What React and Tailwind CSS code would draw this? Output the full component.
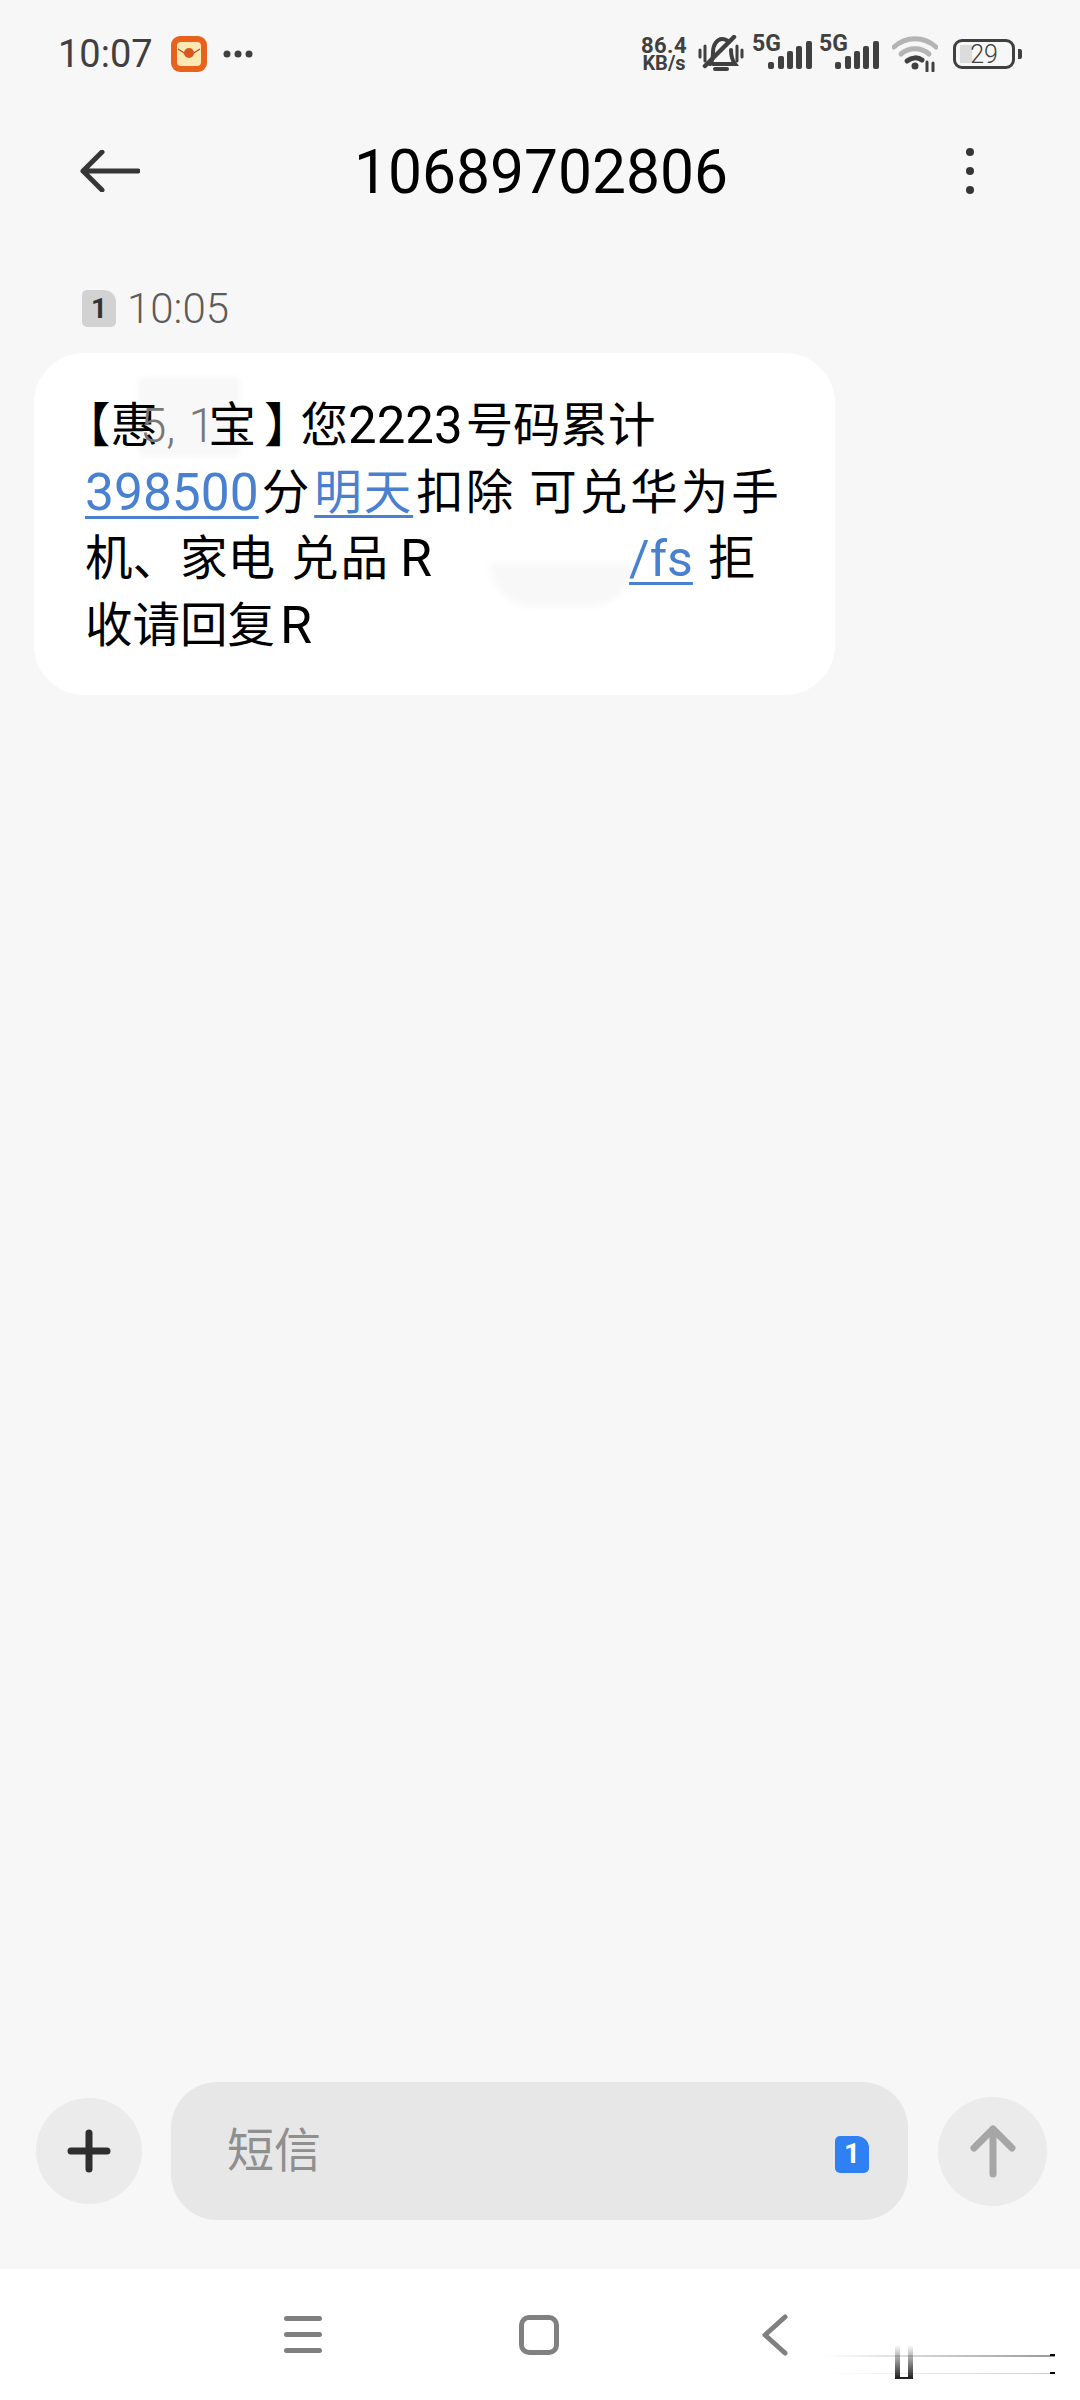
const Bars = () => (
    <svg width="44" height="28" viewBox="0 0 44 28" fill="#404040">
        <rect x="0" y="21" width="6" height="7" rx="2" />
        <rect x="10" y="15" width="6" height="13" rx="2" />
        <rect x="19" y="10" width="6" height="18" rx="2" />
        <rect x="28" y="5" width="6" height="23" rx="2" />
        <rect x="38" y="0" width="6" height="28" rx="2" />
    </svg>
);

const Signal = () => (
    <div className="relative w-[60px] h-[36px]">
        <span className="absolute left-0 top-[-5px] text-[23px] leading-[26px] font-bold text-[#404040]">5G</span>
        <div className="absolute left-[16px] top-[5px]">
            <Bars />
        </div>
    </div>
);

const Link = ({ children, className = '' }) => (
    <span className={`text-[#4a80d0] underline decoration-[2.5px] underline-offset-[6px] ${className}`}>
        {children}
    </span>
);

export default function App() {
    return (
        <div className="flex flex-col w-[1080px] h-[2400px] bg-[#f7f7f7] overflow-hidden font-['Roboto','Noto_Sans_CJK_SC',sans-serif]">
            {/* status bar */}
            <div className="flex items-center justify-between h-[108px] pl-[58px] pr-[58px] text-[#404040]">
                <div className="flex items-center">
                    <span className="text-[38px] leading-[38px] w-[113px]">10:07</span>
                    <svg width="36" height="36" viewBox="0 0 36 36">
                        <rect width="36" height="36" rx="9" fill="#e8621c" />
                        <rect x="6" y="6" width="24" height="24" rx="4" fill="#fde8b4" />
                        <path d="M7 13l11 7 11-7" stroke="#b5481a" strokeWidth="1.2" fill="none" />
                        <circle cx="18" cy="17" r="5" fill="#d9571c" />
                    </svg>
                    <svg width="30" height="8" viewBox="0 0 30 8" className="ml-[16px]" fill="#404040">
                        <circle cx="4" cy="4" r="3.5" />
                        <circle cx="15" cy="4" r="3.5" />
                        <circle cx="26" cy="4" r="3.5" />
                    </svg>
                </div>
                <div className="flex items-center">
                    <div className="flex flex-col items-center w-[50px] font-bold">
                        <span className="text-[22px] leading-[19px] tracking-[0.5px]">86.4</span>
                        <span className="text-[20px] leading-[17px]">KB/s</span>
                    </div>
                    <svg width="46" height="38" viewBox="0 0 46 38" className="ml-[9px]" fill="none" stroke="#404040" strokeLinecap="round">
                        <path d="M2 15v7M7 11v15M39 11v15M44 15v7" strokeWidth="3" />
                        <path d="M12 29c3-3 3-8 3-12 0-7 4-13 9-13 3 0 5 1 7 3M33 15c0 5 1 10 4 14H15" strokeWidth="4" />
                        <path d="M7 31L36 2" strokeWidth="4.5" />
                        <path d="M17 34h12" strokeWidth="4" />
                    </svg>
                    <div className="ml-[8px]">
                        <Signal />
                    </div>
                    <div className="ml-[7px]">
                        <Signal />
                    </div>
                    <svg width="46" height="36" viewBox="0 0 46 36" className="ml-[13px]" fill="none" strokeLinecap="round">
                        <path d="M2 11C14 0 32 0 44 11" stroke="#b4b4b4" strokeWidth="5" />
                        <path d="M9 18c8-7 20-7 28 0" stroke="#b4b4b4" strokeWidth="5" />
                        <path d="M15 25c5-4 11-4 15-1" stroke="#404040" strokeWidth="5" />
                        <circle cx="23" cy="30" r="3.5" fill="#404040" />
                        <path d="M35 26v9M41 27v8" stroke="#404040" strokeWidth="3" />
                    </svg>
                    <div className="flex items-center ml-[15px]">
                        <div className="relative flex items-center justify-center w-[62px] h-[30px] rounded-[9px] border-[3px] border-[#404040]">
                            <div className="absolute left-[4px] top-[3px] bottom-[3px] w-[12px] bg-[#dcdcdc]" />
                            <span className="relative text-[25px] leading-[25px] font-light">29</span>
                        </div>
                        <div className="w-[4px] h-[10px] ml-[3px] bg-[#404040] rounded-r-[2px]" />
                    </div>
                </div>
            </div>

            {/* title row */}
            <div className="flex items-center h-[126px] pl-[80px] pr-[106px]">
                <svg width="60" height="42" viewBox="0 0 60 42" fill="none" stroke="#363636" strokeWidth="5" strokeLinecap="round" strokeLinejoin="round">
                    <path d="M58 21H3M22 2L3 21l19 19" />
                </svg>
                <div className="flex-1 pl-[214px] pt-[3px] text-[60.5px] leading-[60px] text-black">10689702806</div>
                <svg width="8" height="46" viewBox="0 0 8 46" fill="#363636">
                    <circle cx="4" cy="4" r="4" />
                    <circle cx="4" cy="23" r="4" />
                    <circle cx="4" cy="42" r="4" />
                </svg>
            </div>

            {/* time stamp */}
            <div className="flex items-center h-[37px] mt-[56px] pl-[82px]">
                <div className="flex items-center justify-center w-[34px] h-[37px] bg-[#d2d2d2] rounded-[5px] rounded-tr-[12px] text-[28px] font-bold text-[#333]">1</div>
                <span className="ml-[11px] text-[42px] leading-[40px] font-light text-[#5c5c5c]">10:05</span>
            </div>

            {/* message bubble */}
            <div className="relative w-[801px] h-[342px] ml-[34px] mt-[26px] pl-[51px] pt-[40px] bg-white rounded-[50px] text-[47.5px] leading-[66.5px] text-black whitespace-nowrap">
                <div className="absolute left-[104px] top-[24px] w-[102px] h-[80px] bg-[#f8f8f8] rounded-[6px] blur-[2px]" />
                <div className="absolute left-[456px] top-[210px] w-[143px] h-[44px] bg-[#f8f8f8] rounded-b-[60px] blur-[3px]" />
                <div className="relative flex">
                    <span className="ml-[-22px]">【惠</span>
                    <span className="ml-[-18px] text-[#777] font-light">5,</span>
                    <span className="ml-[13px] w-[16px] text-[#777] font-light">1</span>
                    <span className="ml-[4px]">宝</span>
                    <span className="ml-[8px]">】</span>
                    <span className="ml-[-11px]">您</span>
                    <span className="text-[51px]">2223</span>
                    <span className="ml-[3px]">号码累计</span>
                </div>
                <div className="relative flex">
                    <Link className="text-[51.5px]">398500</Link>
                    <span className="ml-[3px]">分</span>
                    <Link className="ml-[5px] tracking-[2px]">明天</Link>
                    <span className="ml-[3px] tracking-[2px]">扣除</span>
                    <span className="ml-[14px] tracking-[3px]">可兑华为手</span>
                </div>
                <div className="relative flex">
                    <span>机、家电</span>
                    <span className="ml-[16px] tracking-[2px]">兑品</span>
                    <span className="ml-[10px] text-[52px]">R</span>
                    <Link className="ml-[197px] text-[50px]">/fs</Link>
                    <span className="ml-[15px]">拒</span>
                </div>
                <div className="relative flex">
                    <span>收请回复</span>
                    <span className="ml-[5px] text-[52px]">R</span>
                </div>
            </div>

            <div className="flex-1" />

            {/* composer */}
            <div className="flex items-center h-[138px] mb-[49px] pl-[36px]">
                <div className="flex items-center justify-center w-[106px] h-[106px] rounded-full bg-[#ebebeb]">
                    <svg width="44" height="44" viewBox="0 0 44 44" stroke="#2f2f2f" strokeWidth="7" strokeLinecap="round">
                        <path d="M4 22h36M22 4v36" />
                    </svg>
                </div>
                <div className="flex items-center justify-between w-[737px] h-[138px] ml-[29px] pl-[56px] pr-[39px] rounded-[46px] bg-[#e7e7e7]">
                    <span className="text-[47px] leading-[46px] text-[#8f8f8f]">短信</span>
                    <div className="flex items-center justify-center w-[34px] h-[37px] mt-[6px] bg-[#2f80f2] rounded-[5px] rounded-tr-[12px] text-[28px] font-bold text-white">1</div>
                </div>
                <div className="flex items-center justify-center w-[109px] h-[109px] ml-[30px] rounded-full bg-[#ebebeb]">
                    <svg width="46" height="54" viewBox="0 0 46 54" fill="none" stroke="#a6a6a6" strokeWidth="7" strokeLinecap="round" strokeLinejoin="round">
                        <path d="M23 50V5M4 24L23 5l19 19" />
                    </svg>
                </div>
            </div>

            {/* nav bar */}
            <div className="relative flex items-center h-[131px] pl-[284px] bg-white">
                <div className="flex flex-col gap-[11px] w-[38px]">
                    <div className="h-[5px] rounded-full bg-[#808080]" />
                    <div className="h-[5px] rounded-full bg-[#808080]" />
                    <div className="h-[5px] rounded-full bg-[#808080]" />
                </div>
                <div className="w-[40px] h-[40px] ml-[197px] rounded-[10px] border-[5px] border-[#808080]" />
                <svg width="26" height="42" viewBox="0 0 26 42" className="ml-[203px]" fill="none" stroke="#808080" strokeWidth="5" strokeLinecap="round" strokeLinejoin="round">
                    <path d="M23 3L3 21l20 18" />
                </svg>
                {/* leftover marks near the bottom corner */}
                <div className="absolute left-[825px] top-[86px] w-[230px] h-[2px] bg-gradient-to-r from-transparent to-[#999]" />
                <div className="absolute left-[825px] top-[104px] w-[230px] h-[1px] bg-gradient-to-r from-transparent to-[#ccc]" />
                <div className="absolute left-[895px] top-[76px] w-[5px] h-[33px] bg-gradient-to-b from-transparent to-[#222]" />
                <div className="absolute left-[908px] top-[76px] w-[5px] h-[33px] bg-gradient-to-b from-transparent to-[#222]" />
                <div className="absolute left-[895px] top-[108px] w-[18px] h-[2px] bg-[#222]" />
                <div className="absolute left-[1050px] top-[85px] w-[5px] h-[2px] bg-black" />
                <div className="absolute left-[1050px] top-[103px] w-[5px] h-[2px] bg-black" />
            </div>
        </div>
    );
}
